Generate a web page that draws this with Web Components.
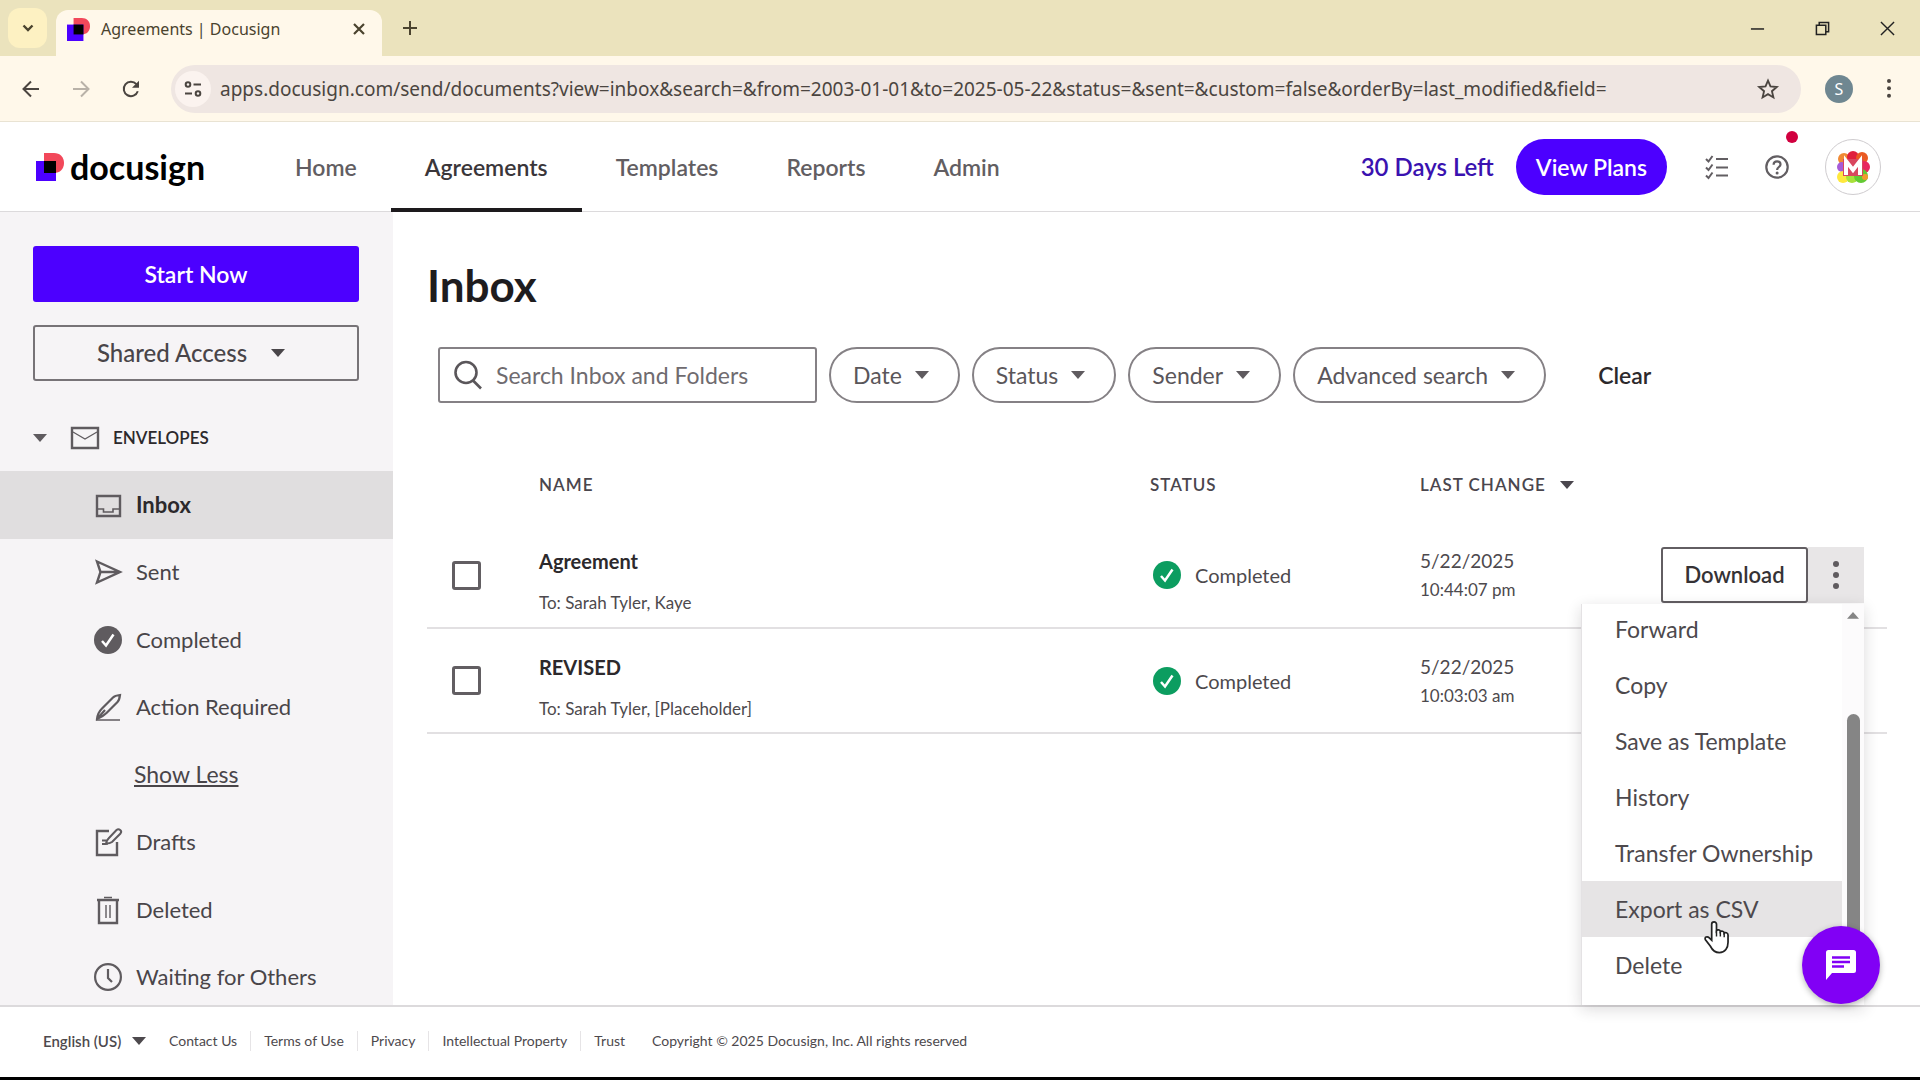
<!DOCTYPE html>
<html lang="en">
<head>
<meta charset="utf-8">
<title>Agreements | Docusign</title>
<style>
  html, body { margin: 0; height: 100%; }
  body { font-family: Lato, "Liberation Sans", sans-serif; color: #3c393c; background: #fff; overflow: hidden; }
</style>
</head>
<body>
<app-window></app-window>

<script>
const sheet = `
  *, *::before, *::after { box-sizing: border-box; }
  button, input, select { font: inherit; color: inherit; background: none; border: 0; margin: 0; padding: 0; }
  button { cursor: pointer; }
  a { color: inherit; text-decoration: none; }
`;

function define(name, css, html) {
  const template = document.createElement('template');
  template.innerHTML = `<style>${sheet}${css}</style>${html}`;
  customElements.define(name, class extends HTMLElement {
    constructor() {
      super();
      this.attachShadow({ mode: 'open' }).append(template.content.cloneNode(true));
    }
  });
}

const icons = {
  down: ['0 0 16 16', '<path d="M3.5 5.5 8 10l4.500-4.500" fill="none" stroke="currentColor" stroke-width="2.400"/>'],
  caret: ['0 0 14 8', '<path d="M0 0h14L7 8z" fill="currentColor"/>'],
  up: ['0 0 14 8', '<path d="M0 8h14L7 0z" fill="currentColor"/>'],
  mark: ['0 0 28 28', '<path d="M8 0h10c6 0 10 4 10 10s-4 10-10 10H8z" fill="#f2485a"/><path d="M0 8h20v20H0z" fill="#4c00ff"/><path d="M8 8h12v12H8z" fill="#000"/>'],
  close: ['0 0 14 14', '<path d="M2 2l10 10M12 2 2 12" stroke="currentColor" stroke-width="2.200"/>'],
  plus: ['0 0 16 16', '<path d="M8 1v14M1 8h14" stroke="currentColor" stroke-width="2"/>'],
  minimize: ['0 0 16 16', '<path d="M1 8.500h14" stroke="currentColor" stroke-width="1.600"/>'],
  restore: ['0 0 16 16', '<path d="M1.500 4.500h10v10h-10zM4.500 4.500v-3h10v10h-3" fill="none" stroke="currentColor" stroke-width="1.600"/>'],
  exit: ['0 0 16 16', '<path d="M1 1l14 14M15 1 1 15" stroke="currentColor" stroke-width="1.500"/>'],
  back: ['0 0 18 18', '<path d="M17 9H2M9 1.500 1.500 9 9 16.500" fill="none" stroke="currentColor" stroke-width="2"/>'],
  forward: ['0 0 18 18', '<path d="M1 9h15M9 1.500 16.500 9 9 16.500" fill="none" stroke="currentColor" stroke-width="2"/>'],
  reload: ['0 0 18 18', '<path d="M15.800 11.200A7.200 7.200 0 1 1 14.400 4.200" fill="none" stroke="currentColor" stroke-width="2"/><path d="M17 .8v7h-7z" fill="currentColor"/>'],
  tune: ['0 0 18 18', '<g fill="none" stroke="currentColor" stroke-width="2"><circle cx="4" cy="4.500" r="2.300"/><path d="M9.500 4.500H17M1 13.500h7"/><circle cx="14" cy="13.500" r="2.300"/></g>'],
  star: ['0 0 24 24', '<path d="M12 2.800 14.700 9.200l6.900.6-5.300 4.600 1.600 6.800L12 17.600l-5.900 3.600 1.600-6.800L2.400 9.800l6.900-.6z" fill="none" stroke="currentColor" stroke-width="2"/>'],
  dots: ['0 0 6 28', '<g fill="currentColor"><circle cx="3" cy="3" r="3"/><circle cx="3" cy="14" r="3"/><circle cx="3" cy="25" r="3"/></g>'],
  tasks: ['0 0 24 24', '<path d="M1 4l2.500 2.500L7.500 1M1 12.500 3.500 15l4-5.500M1 20.500 3.500 23l4-5.500M11 4h12M11 12.500h12M11 20.500h12" fill="none" stroke="currentColor" stroke-width="2"/>'],
  help: ['0 0 24 24', '<circle cx="12" cy="12" r="10.700" fill="none" stroke="currentColor" stroke-width="2.200"/><path d="M8.600 9.800c0-2 1.400-3.500 3.500-3.500s3.400 1.300 3.400 3.100c0 2.600-3.400 2.600-3.400 5.600" fill="none" stroke="currentColor" stroke-width="2.200"/><circle cx="12.100" cy="18" r="1.500" fill="currentColor"/>'],
  envelope: ['0 0 28 22', '<path d="M1 1h26v20H1z" fill="none" stroke="currentColor" stroke-width="2.400"/><path d="M2 5l12 7 12-7" fill="none" stroke="currentColor" stroke-width="1.200"/>'],
  inbox: ['0 0 28 28', '<path d="M3 5h23v20H3z" fill="none" stroke="currentColor" stroke-width="2.400"/><path d="M3 18h6.500v3h9.500v-3h7" fill="none" stroke="currentColor" stroke-width="1.600"/>'],
  send: ['0 0 28 28', '<path d="M3 3.500 26 14 3 24.500l3.500-10.500zM6.500 14H24" fill="none" stroke="currentColor" stroke-width="2.400"/>'],
  done: ['0 0 28 28', '<circle cx="14" cy="14" r="14" fill="currentColor"/><path d="M8 15l4 4.500 7.500-11" fill="none" stroke="#fff" stroke-width="2.500"/>'],
  pen: ['0 0 28 28', '<path d="M3 26c.5-5 2-7.500 5-10.500L19 4.500c1.500-1.500 3-2 7-2.500-.5 4-1 5.500-2.500 7L12.500 20C10 22.500 8 24 3 26zM3 26l8-9" fill="none" stroke="currentColor" stroke-width="2.200"/><path d="M2 27h24" stroke="currentColor" stroke-width="1.500"/>'],
  draft: ['0 0 28 28', '<path d="M15 3H3v24h20V14" fill="none" stroke="currentColor" stroke-width="2.400"/><path d="M12 15.500c.5-2.500 1-3.500 2.500-5l8-8.500c2.500-2 6 1 4 3.500l-8.500 8.500c-1.500 1.200-3 1.500-6 1.500zM8 12.500h5M8 16h6" fill="none" stroke="currentColor" stroke-width="2"/>'],
  trash: ['0 0 28 28', '<path d="M3 4h22M5 4v23h18V4" fill="none" stroke="currentColor" stroke-width="2.400"/><path d="M10 1.500h8M12 9v13M16 9v13" stroke="currentColor" stroke-width="1.400"/>'],
  clock: ['0 0 28 28', '<circle cx="14" cy="14" r="12.900" fill="none" stroke="currentColor" stroke-width="2.200"/><path d="M14 6v9l4 4" fill="none" stroke="currentColor" stroke-width="2.200"/>'],
  search: ['0 0 28 28', '<circle cx="12" cy="11.500" r="10.500" fill="none" stroke="currentColor" stroke-width="2.600"/><path d="M19 19.500l8 8" stroke="currentColor" stroke-width="2.600"/>'],
  chat: ['0 0 30 30', '<path d="M2.500 0h25A2.500 2.500 0 0 1 30 2.500v18a2.500 2.500 0 0 1-2.500 2.500H6l-6 7V2.500A2.500 2.500 0 0 1 2.500 0z" fill="#fff"/><path d="M6 7.500h18M6 12h18M6 16.500h12" stroke="#8100f5" stroke-width="2.600"/>'],
  hand: ['0 0 26 34', '<path d="M8 17V3.500a2.500 2.500 0 0 1 5 0V10c1-1.500 4-1 4 1 1-1 4-.5 4 1.500 1-1 4-.5 4 2V22c0 6-3 11-9 11-5 0-7.500-3-9.500-7L1.500 19.500c-1.500-3 2-4 4-2L8 20z" fill="#fff" stroke="#222" stroke-width="1.800"/><path d="M13 10v6M17 11v5M21 12.500V17" stroke="#222" stroke-width="1.500"/>'],
  brand: ['0 0 36 36', '<g><circle cx="9" cy="10" r="6" fill="#f08a35"/><circle cx="18" cy="8" r="6" fill="#e01f3d"/><circle cx="27" cy="9" r="6" fill="#ea5a22"/><circle cx="7" cy="18" r="5" fill="#a65bd8"/><circle cx="29" cy="18" r="6" fill="#e8265f"/><circle cx="8" cy="28" r="6" fill="#ffe83d"/><circle cx="17" cy="28" r="6" fill="#a8e03a"/><circle cx="26" cy="27" r="7" fill="#63c933"/><circle cx="30" cy="28" r="3" fill="#f29a2e"/><path d="M8 10h20v17H8z" fill="#d9465e"/></g><path d="M11 26V12l7 9 7-9v14" fill="none" stroke="#fff" stroke-width="4"/>']
};

customElements.define('ui-icon', class extends HTMLElement {
  connectedCallback() {
    if (this.shadowRoot) return;
    const [box, body] = icons[this.getAttribute('name')];
    this.attachShadow({ mode: 'open' }).innerHTML =
      `<style>:host{display:block;flex:none;width:28px}svg{display:block;width:100%;overflow:visible}</style><svg viewBox="${box}" aria-hidden="true">${body}</svg>`;
  }
});

/* Browser tab strip */
define('tab-strip', `
  :host { display: flex; height: 56px; padding-left: 8px; background: #ebe3bd; color: #4a432e; font: 16px/24px "Noto Sans", "Open Sans", sans-serif; }
  .list { width: 39px; height: 40px; margin-top: 8px; border-radius: 12px; background: #fdf1c2; display: grid; place-items: center; }
  .list ui-icon { width: 16px; }
  .tab { display: flex; align-items: center; gap: 11px; width: 326px; margin: 10px 0 0 9px; padding: 0 16px 8px 11px; border-radius: 12px 12px 0 0; background: #fff8ea; }
  .tab span { flex: 1; }
  .tab ui-icon { width: 23px; }
  .tab button ui-icon { width: 14px; }
  .add { width: 56px; display: grid; place-items: center; }
  .add ui-icon { width: 16px; }
  .controls { margin-left: auto; display: flex; }
  .controls button { width: 65px; display: grid; place-items: center; color: #222; }
  .controls ui-icon { width: 15px; }
`, `
  <button class="list" aria-label="Search tabs"><ui-icon name="down"></ui-icon></button>
  <div class="tab"><ui-icon name="mark"></ui-icon><span>Agreements | Docusign</span><button aria-label="Close tab"><ui-icon name="close"></ui-icon></button></div>
  <button class="add" aria-label="New tab"><ui-icon name="plus"></ui-icon></button>
  <div class="controls">
    <button aria-label="Minimize"><ui-icon name="minimize"></ui-icon></button>
    <button aria-label="Restore"><ui-icon name="restore"></ui-icon></button>
    <button aria-label="Close"><ui-icon name="exit"></ui-icon></button>
  </div>
`);

/* Browser address row */
define('address-bar', `
  :host { display: flex; align-items: center; height: 66px; padding: 0 29px 0 22px; background: #fff8ea; border-bottom: 1px solid #e9e3d3; color: #4b4540; font: 19px/28px "Noto Sans", "Open Sans", sans-serif; }
  .nav { display: flex; gap: 32px; }
  .nav ui-icon { width: 18px; }
  .off { color: #b9b2a8; }
  .field { flex: 1; display: flex; align-items: center; height: 48px; margin-left: 31px; padding: 0 22px 0 4px; border-radius: 24px; background: #efe6e2; }
  .site { width: 36px; height: 36px; border-radius: 50%; background: #fbf3ef; display: grid; place-items: center; }
  .site ui-icon { width: 18px; }
  input { flex: 1; min-width: 0; margin-left: 9px; outline: 0; }
  .star ui-icon { width: 22px; }
  .user { width: 28px; height: 28px; margin: 0 34px 0 24px; border-radius: 50%; background: #6f8791; color: #fff; font-size: 16px; line-height: 28px; }
  .more ui-icon { width: 4px; }
`, `
  <div class="nav">
    <button aria-label="Back"><ui-icon name="back"></ui-icon></button>
    <button class="off" aria-label="Forward"><ui-icon name="forward"></ui-icon></button>
    <button aria-label="Reload"><ui-icon name="reload"></ui-icon></button>
  </div>
  <div class="field">
    <button class="site" aria-label="Site information"><ui-icon name="tune"></ui-icon></button>
    <input type="text" aria-label="Address" value="apps.docusign.com/send/documents?view=inbox&amp;search=&amp;from=2003-01-01&amp;to=2025-05-22&amp;status=&amp;sent=&amp;custom=false&amp;orderBy=last_modified&amp;field=">
    <button class="star" aria-label="Bookmark"><ui-icon name="star"></ui-icon></button>
  </div>
  <button class="user">S</button>
  <button class="more" aria-label="Menu"><ui-icon name="dots"></ui-icon></button>
`);

/* Product header */
define('site-header', `
  :host { display: flex; align-items: center; height: 90px; padding: 0 39px 0 36px; border-bottom: 1px solid #dcdadc; font-size: 23px; line-height: 28px; font-weight: 600; color: #625e62; }
  .logo { display: flex; align-items: center; gap: 6px; width: 225px; color: #000; font-size: 34px; line-height: 36px; font-weight: 700; }
  nav { display: flex; align-self: stretch; flex: 1; }
  nav a { display: flex; align-items: center; padding: 4px 34px 0; margin-bottom: -1px; border-bottom: 4px solid transparent; }
  nav a.on { color: #3a363a; border-color: #1d1a1d; }
  .days { color: #3a12b0; font-size: 24px; }
  .plans { height: 56px; margin: 0 38px 0 22px; padding: 0 20px; border-radius: 28px; background: #4c00ff; color: #fff; font-weight: 600; }
  .tool { position: relative; margin-right: 36px; }
  .tool ui-icon { width: 24px; }
  .dot { position: absolute; right: -9px; top: -24px; width: 12px; height: 12px; border-radius: 50%; background: #d1003f; }
  .avatar { width: 56px; height: 56px; border: 1px solid #cfcccf; border-radius: 50%; display: grid; place-items: center; }
  .avatar ui-icon { width: 36px; }
`, `
  <a class="logo" href="#"><ui-icon name="mark"></ui-icon>docusign</a>
  <nav>
    <a href="#">Home</a><a class="on" href="#">Agreements</a><a href="#">Templates</a><a href="#">Reports</a><a href="#">Admin</a>
  </nav>
  <a class="days" href="#">30 Days Left</a>
  <button class="plans">View Plans</button>
  <button class="tool" aria-label="Tasks"><ui-icon name="tasks"></ui-icon></button>
  <button class="tool" aria-label="Help"><ui-icon name="help"></ui-icon><i class="dot"></i></button>
  <button class="avatar" aria-label="Account"><ui-icon name="brand"></ui-icon></button>
`);

/* Sidebar */
define('nav-item', `
  :host { display: block; }
  a { display: flex; align-items: center; gap: 14px; height: 100%; padding: 0 0 0 94px; }
  :host([selected]) a { background: #e0dedf; color: #2c292c; font-weight: 700; }
  ::slotted(ui-icon) { color: #5f5b5f; }
`, `<a href="#"><slot name="icon"></slot><slot></slot></a>`);

define('side-nav', `
  :host { display: block; width: 393px; flex: none; padding-top: 34px; background: #f6f4f6; font-size: 22px; line-height: 28px; overflow: hidden; color: #494549; }
  .actions { display: flex; flex-direction: column; gap: 23px; padding: 0 34px 0 33px; }
  .actions button { height: 56px; border-radius: 3px; font-weight: 600; }
  .start { background: #4c00ff; color: #fff; font-size: 23px; }
  .shared { display: flex; align-items: center; justify-content: center; gap: 24px; border: 2px solid #777377; font-size: 24px; }
  .actions .shared { padding-right: 10px; font-weight: 500; }
  .shared ui-icon { width: 14px; }
  .group { display: flex; align-items: center; width: 100%; height: 90px; padding: 23px 0 0 33px; font-size: 17px; line-height: 24px; font-weight: 600; color: #2c292c; }
  .group ui-icon { color: #5f5b5f; width: 14px; margin-right: 24px; }
  .group ui-icon + ui-icon { width: 28px; margin-right: 14px; }
  .items { display: grid; grid-auto-rows: 1fr; height: 540px; }
  .less { display: flex; align-items: center; padding: 0 0 2px 134px; }
  .less a { font-size: 23px; text-decoration: underline; text-underline-offset: 2px; }
`, `
  <div class="actions">
    <button class="start">Start Now</button>
    <button class="shared">Shared Access <ui-icon name="caret"></ui-icon></button>
  </div>
  <button class="group"><ui-icon name="caret"></ui-icon><ui-icon name="envelope"></ui-icon>ENVELOPES</button>
  <div class="items">
    <nav-item selected><ui-icon slot="icon" name="inbox"></ui-icon>Inbox</nav-item>
    <nav-item><ui-icon slot="icon" name="send"></ui-icon>Sent</nav-item>
    <nav-item><ui-icon slot="icon" name="done"></ui-icon>Completed</nav-item>
    <nav-item><ui-icon slot="icon" name="pen"></ui-icon>Action Required</nav-item>
    <div class="less"><a href="#">Show Less</a></div>
    <nav-item><ui-icon slot="icon" name="draft"></ui-icon>Drafts</nav-item>
    <nav-item><ui-icon slot="icon" name="trash"></ui-icon>Deleted</nav-item>
    <nav-item><ui-icon slot="icon" name="clock"></ui-icon>Waiting for Others</nav-item>
  </div>
`);

/* Filters */
define('filter-pill', `
  :host { display: block; }
  button { display: flex; align-items: center; gap: 13px; height: 56px; padding: 0 29px 0 22px; border: 2px solid #858185; border-radius: 28px; white-space: nowrap; }
  ui-icon { width: 14px; color: #5f5b5f; }
`, `<button aria-haspopup="true"><slot></slot><ui-icon name="caret"></ui-icon></button>`);

define('filter-bar', `
  :host { display: flex; align-items: center; gap: 12px; padding-left: 11px; font-size: 23px; line-height: 28px; color: #5a565a; }
  label { display: flex; align-items: center; gap: 14px; width: 379px; height: 56px; padding: 0 14px; border: 2px solid #858185; border-radius: 3px; }
  input { flex: 1; min-width: 0; outline: 0; }
  input::placeholder { color: #6f6b6f; opacity: 1; }
  .clear { margin-left: 40px; color: #2c292c; font-weight: 600; }
`, `
  <label><ui-icon name="search"></ui-icon><input type="search" aria-label="Search Inbox and Folders" placeholder="Search Inbox and Folders"></label>
  <filter-pill>Date</filter-pill>
  <filter-pill>Status</filter-pill>
  <filter-pill>Sender</filter-pill>
  <filter-pill>Advanced search</filter-pill>
  <button class="clear">Clear</button>
`);

/* Row menu */
define('action-menu', `
  :host { display: flex; width: 283px; height: 401px; background: #fff; border-left: 1px solid #e4e2e4; box-shadow: 0 4px 14px rgba(30,25,30,.16); font-size: 23px; line-height: 28px; color: #4d494d; }
  .list { flex: 1; display: flex; flex-direction: column; justify-content: flex-end; overflow: hidden; padding-bottom: 12px; }
  button { flex: none; height: 56px; padding: 0 0 0 33px; text-align: left; white-space: nowrap; }
  .hover { background: #e6e4e5; }
  .bar { width: 22px; display: flex; flex-direction: column; align-items: center; gap: 95px; padding: 8px 0 0; background: #fcfbfc; color: #858585; }
  .bar ui-icon { width: 12px; }
  .thumb { flex: 1; width: 13px; border-radius: 7px 7px 0 0; background: #858585; margin-bottom: 40px; }
`, `
  <div class="list" role="menu">
    <button role="menuitem">Forward</button><button role="menuitem">Copy</button><button role="menuitem">Save as Template</button><button role="menuitem">History</button><button role="menuitem">Transfer Ownership</button><button role="menuitem" class="hover">Export as CSV</button><button role="menuitem">Delete</button>
  </div>
  <div class="bar"><ui-icon name="up"></ui-icon><div class="thumb"></div></div>
`);

/* Envelope table */
define('envelope-table', `
  :host { display: block; font-size: 20px; line-height: 28px; color: #4d494d; }
  table { width: 100%; table-layout: fixed; border-collapse: collapse; }
  .c-check { width: 112px; } .c-status { width: 270px; } .c-date { width: 190px; } .c-act { width: 277px; }
  th { height: 75px; padding: 0 0 2px; text-align: left; font-size: 17px; line-height: 24px; font-weight: 600; letter-spacing: 1px; color: #4a464d; }
  th button { display: flex; align-items: center; gap: 14px; letter-spacing: inherit; }
  th ui-icon { width: 14px; }
  td { height: 105px; padding: 0; vertical-align: middle; border-bottom: 2px solid #e2e0e2; }
  td.top { vertical-align: top; padding-top: 24px; }
  td.top div + div { font-size: 17px; line-height: 26px; }
  td.top .name { margin-bottom: 15px; color: #2c292c; font-weight: 700; }
  td.date { font-size: 19px; }
  td.date div + div { line-height: 30px; }
  input { display: block; appearance: none; width: 29px; height: 29px; margin-left: 25px; border: 3px solid #625e62; border-radius: 3px; background: #fff; }
  .status { display: flex; align-items: center; gap: 14px; padding-left: 3px; }
  .status ui-icon { color: #0c9d60; }
  .act { position: relative; display: flex; justify-content: flex-end; padding-right: 23px; }
  .dl { width: 147px; height: 56px; border: 2px solid #625e62; border-radius: 3px; background: #fff; font-size: 22px; font-weight: 600; color: #353235; }
  .more { width: 56px; height: 56px; display: grid; place-items: center; background: #e8e6e7; }
  .more ui-icon { width: 6px; color: #5f5b5f; }
  action-menu { position: absolute; right: 23px; top: 57px; z-index: 2; }
`, `
  <table>
    <colgroup><col class="c-check"><col><col class="c-status"><col class="c-date"><col class="c-act"></colgroup>
    <thead><tr><th></th><th>NAME</th><th>STATUS</th><th><button>LAST CHANGE <ui-icon name="caret"></ui-icon></button></th><th></th></tr></thead>
    <tbody>
      <tr>
        <td><input type="checkbox" aria-label="Select Agreement"></td>
        <td class="top"><div class="name">Agreement</div><div>To: Sarah Tyler, Kaye</div></td>
        <td><div class="status"><ui-icon name="done"></ui-icon>Completed</div></td>
        <td class="top date"><div>5/22/2025</div><div>10:44:07 pm</div></td>
        <td><div class="act"><button class="dl">Download</button><button class="more" aria-label="More actions"><ui-icon name="dots"></ui-icon></button><action-menu></action-menu></div></td>
      </tr>
      <tr>
        <td><input type="checkbox" aria-label="Select REVISED"></td>
        <td class="top"><div class="name">REVISED</div><div>To: Sarah Tyler, [Placeholder]</div></td>
        <td><div class="status"><ui-icon name="done"></ui-icon>Completed</div></td>
        <td class="top date"><div>5/22/2025</div><div>10:03:03 am</div></td>
        <td></td>
      </tr>
    </tbody>
  </table>
`);

/* Footer */
define('site-footer', `
  :host { display: flex; align-items: center; height: 75px; padding: 0 43px 2px; border-top: 2px solid #dcdadc; border-bottom: 3px solid #000; font-size: 14px; line-height: 20px; color: #4d494d; }
  label { display: flex; align-items: center; gap: 10px; margin-right: 23px; font-size: 15px; font-weight: 600; }
  label ui-icon { width: 14px; }
  select { appearance: none; }
  ul { display: flex; list-style: none; margin: 0 27px 0 0; padding: 0; }
  li + li { margin-left: 13px; padding-left: 13px; border-left: 1px solid #e6e4e6; }
`, `
  <label><select aria-label="Language"><option>English (US)</option></select><ui-icon name="caret"></ui-icon></label>
  <ul><li><a href="#">Contact Us</a></li><li><a href="#">Terms of Use</a></li><li><a href="#">Privacy</a></li><li><a href="#">Intellectual Property</a></li><li><a href="#">Trust</a></li></ul>
  <span>Copyright © 2025 Docusign, Inc. All rights reserved</span>
`);

define('chat-button', `
  :host { display: block; }
  button { width: 78px; height: 78px; border-radius: 50%; background: #8100f5; display: grid; place-items: center; box-shadow: 0 2px 6px rgba(0,0,0,.3); }
  ui-icon { width: 30px; }
`, `<button aria-label="Chat"><ui-icon name="chat"></ui-icon></button>`);

define('app-window', `
  :host { display: flex; flex-direction: column; height: 100vh; position: relative; }
  .body { flex: 1; min-height: 0; display: flex; }
  main { flex: 1; min-width: 0; padding: 44px 33px 0 34px; }
  h1 { margin: 0; height: 91px; font-size: 44px; line-height: 58px; font-weight: 700; color: #1e1c1e; }
  envelope-table { margin-top: 45px; }
  chat-button { position: absolute; right: 40px; bottom: 76px; z-index: 3; }
  .pointer { position: absolute; right: 191px; bottom: 126px; width: 25px; z-index: 4; }
`, `
  <tab-strip></tab-strip>
  <address-bar></address-bar>
  <site-header></site-header>
  <div class="body">
    <side-nav></side-nav>
    <main>
      <h1>Inbox</h1>
      <filter-bar></filter-bar>
      <envelope-table></envelope-table>
    </main>
  </div>
  <site-footer></site-footer>
  <chat-button></chat-button>
  <ui-icon class="pointer" name="hand"></ui-icon>
`);
</script>
</body>
</html>
